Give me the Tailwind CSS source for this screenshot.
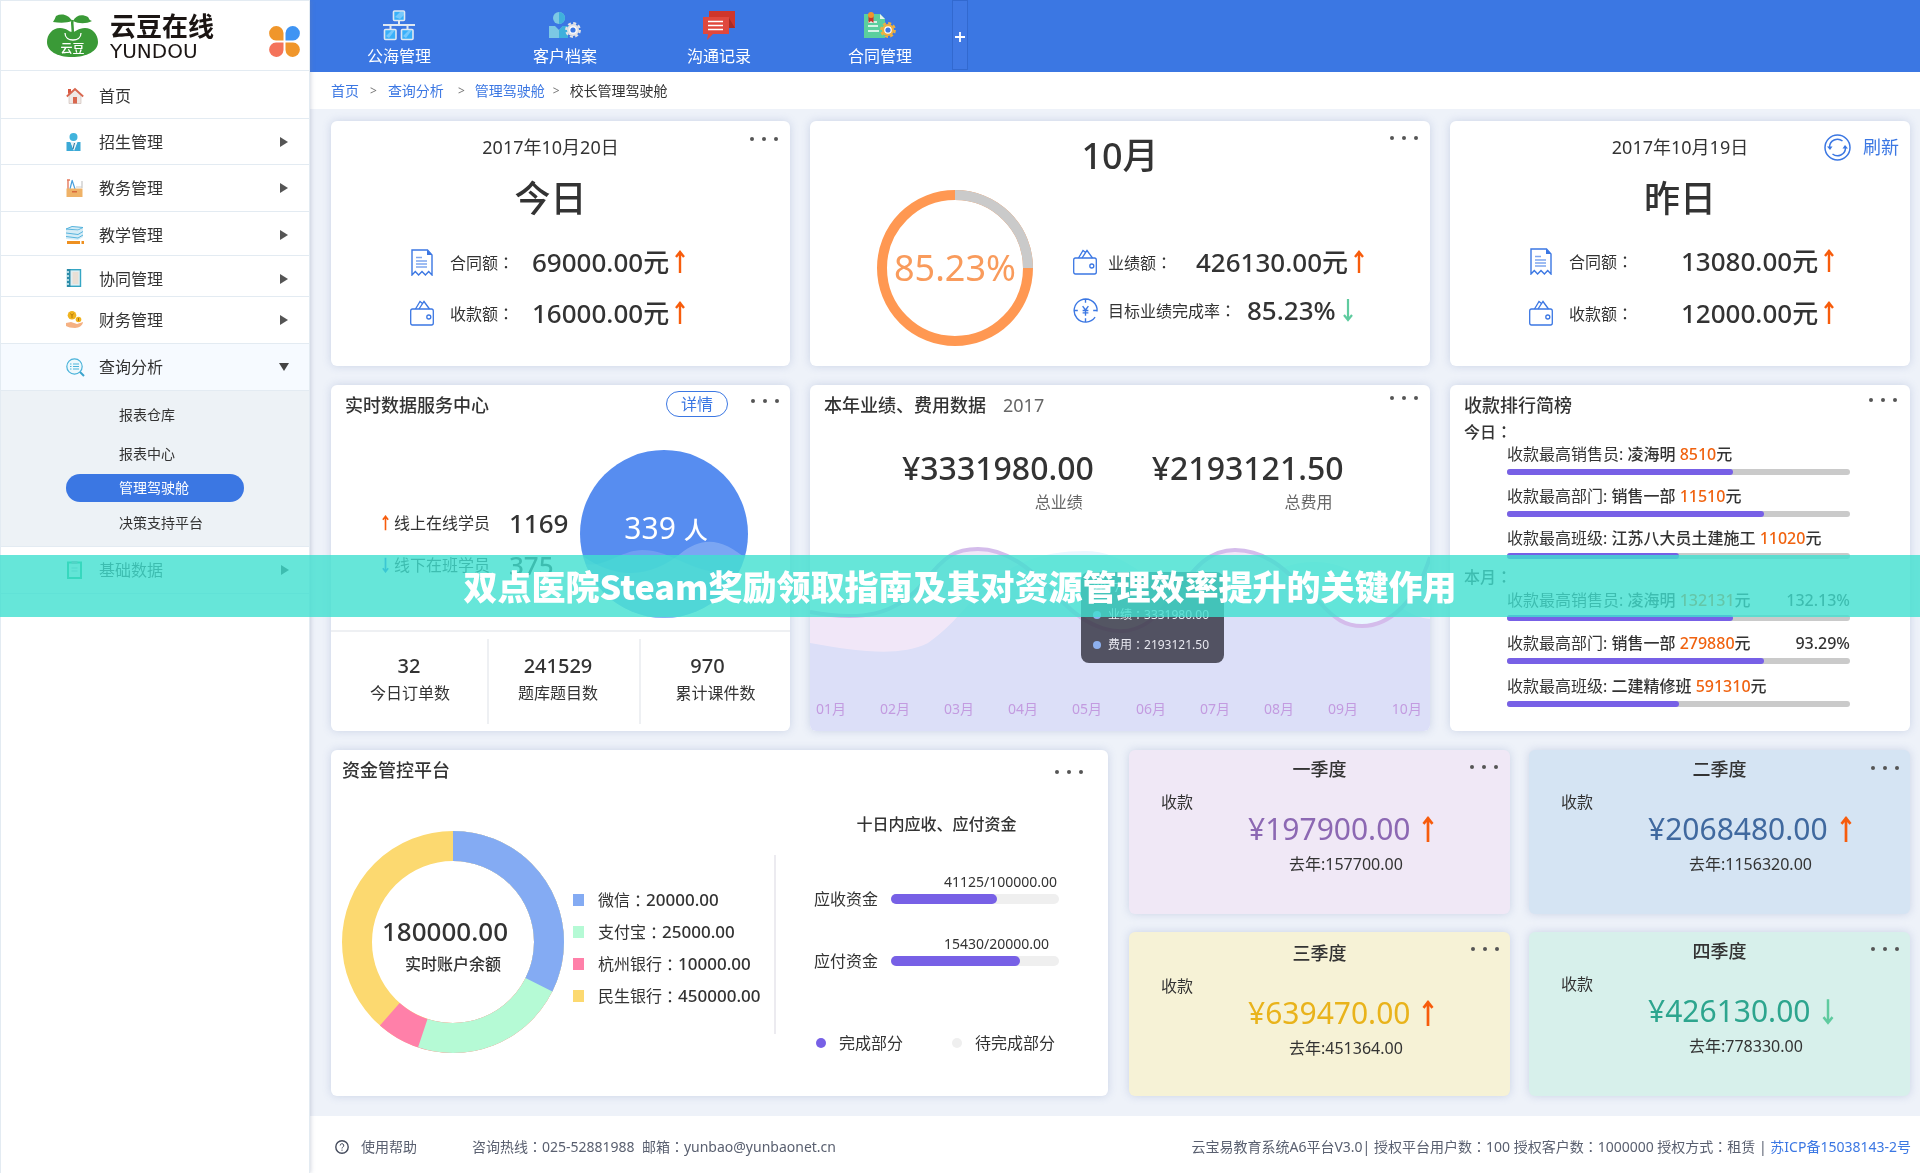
<!DOCTYPE html>
<html lang="zh-CN">
<head>
<meta charset="utf-8">
<title>校长管理驾驶舱</title>
<meta name="viewport" content="width=device-width, initial-scale=1">
<script src="https://cdn.jsdelivr.net/npm/@tailwindcss/browser@4"></script>
</head>
<body class="relative flex min-h-screen bg-[#eef2f9] font-['Noto_Sans','Noto_Sans_CJK_SC',sans-serif] text-base leading-6 text-[#333]">

<!-- shared symbols -->
<svg class="hidden">
  <symbol id="dots" viewBox="0 0 28 4"><g fill="#555"><circle cx="2" cy="2" r="2"/><circle cx="14" cy="2" r="2"/><circle cx="26" cy="2" r="2"/></g></symbol>
  <symbol id="up" viewBox="0 0 12 24"><path d="M6 1v22M2 7l4-5 4 5" fill="none" stroke="#f75c0c" stroke-width="2.4"/></symbol>
  <symbol id="down" viewBox="0 0 12 24"><path d="M6 1v21M2 17l4 5 4-5" fill="none" stroke="#5fcb9f" stroke-width="2.2"/></symbol>
  <symbol id="receipt" viewBox="0 0 22 27"><path d="M1 1h15.500l4.500 5v20l-3.300-3.500-3.300 3.500-3.400-3.500-3.400 3.500-3.300-3.500L1 26z" fill="none" stroke="#3b77e3" stroke-width="1.400"/><path d="M16 1v5h5z" fill="#3b77e3"/><path d="M5 8.500h6M5 12h11M5 15h11M5 18h11" stroke="#7fa6ee" stroke-width="1.300"/></symbol>
  <symbol id="wallet" viewBox="0 0 24 26"><g fill="none" stroke="#3b77e3" stroke-width="1.300"><path d="M2.500 9h19q1.800 0 1.800 2v12q0 2-1.800 2h-19Q.7 25 .7 23V11q0-2 1.800-2z"/><path d="M5.500 9l4.500-7.500 2.500 2M9 9l5-7.500L19.500 9"/><circle cx="18.800" cy="17" r="2"/></g></symbol>
  <symbol id="target" viewBox="0 0 26 26"><g fill="none" stroke="#3b77e3" stroke-width="1.400"><path d="M25 11A12 12 0 1 0 23 20M25 11v3M13 1v4M13 21v4M1 13h4M21 13h4"/><path d="M10 8.500l3 4 3-4M13 12.500v6M10 13h6M10 15.500h6"/></g></symbol>
  <symbol id="gear" viewBox="0 0 16 16"><circle cx="8" cy="8" r="6" fill="currentColor"/><circle cx="8" cy="8" r="6.800" fill="none" stroke="currentColor" stroke-width="2.200" stroke-dasharray="3 2.340"/><circle cx="8" cy="8" r="3.800" fill="#fff"/><circle cx="8" cy="8" r="2.600" fill="#3b77e3"/></symbol>
</svg>

<!-- sidebar -->
<aside class="z-10 w-[310px] shrink-0 border-x border-t border-[#e3ebf2] bg-white shadow-[1px_0_4px_rgba(120,130,160,0.3)]">
  <div class="flex h-[70px] items-center border-b border-[#e3ebf2] pl-[46px]">
    <svg class="h-[44px] w-[51px] shrink-0" viewBox="0 0 51 44">
      <path d="M25 18c-3 0-5-4-12-4C5 14 0 21 0 28c0 9 10 15 25 15s26-6 26-15c0-8-6-14-13-14-7 0-9 4-13 4z" fill="#3a9a37"/>
      <path d="M25 7C22 1 15-1 9 2q-1 3-3 6c7 1 14 1 19-1zM26 7c3-6 9-7 15-4q1 3 4 4c-6 3-13 3-19 0z" fill="#3a9a37"/>
      <path d="M25.500 6c-1 5 1 8 0 14" stroke="#3a9a37" stroke-width="2.500" fill="none"/>
      <path d="M18 19c0 5 4 7 8 7s8-2 8-7" stroke="#fff" stroke-width="1.300" fill="none"/>
      <text x="25.500" y="39" text-anchor="middle" font-size="12" font-weight="500" fill="#fff" font-family="Noto Sans CJK SC, sans-serif">云豆</text>
    </svg>
    <div class="ml-3 w-[104px] shrink-0 text-[#1b1513]">
      <div class="font-['Noto_Sans_CJK_SC',sans-serif] text-[26px] leading-[26px] font-bold">云豆在线</div>
      <div class="mt-1 font-['DejaVu_Sans',sans-serif] text-[20px] leading-[18px]">YUNDOU</div>
    </div>
    <svg class="mt-3 ml-[55px] size-[31px] shrink-0" viewBox="0 0 31 31">
      <path d="M14.500 14.500H7A7.200 7.200 0 1 1 14.500 7z" fill="#f0962b"/><path d="M16.500 14.500V7A7.200 7.200 0 1 1 24 14.500z" fill="#3f94f3"/>
      <path d="M14.500 16.500V24A7.200 7.200 0 1 1 7 16.500z" fill="#f4735a"/><path d="M16.500 16.500H24A7.200 7.200 0 1 1 16.500 24z" fill="#f0962b"/>
    </svg>
  </div>
  <nav>
    <a href="#" class="flex h-12 items-center border-b border-[#e3ebf2] pt-[2px] pl-[65px]">
      <svg class="mr-[15px] size-[18px]" viewBox="0 0 18 18"><path d="M3 9l6-6 6 6v7.500H3z" fill="#efe9e6" stroke="#c9b9b2" stroke-width=".6"/><path d="M.8 9.500L9 2l8.200 7.500" fill="none" stroke="#d9674f" stroke-width="1.800"/><path d="M2 2h3v3L2 7z" fill="#d9573f"/><path d="M7 10h4v6.500H7z" fill="#d9674f"/></svg>首页</a>
    <a href="#" class="flex h-[46px] items-center border-b border-[#e3ebf2] pl-[65px]">
      <svg class="mr-[15px] size-[18px]" viewBox="0 0 18 18"><circle cx="7.500" cy="4" r="4" fill="#41b3dc"/><path d="M.5 9h4l3.500 9 3.500-9h3v9H.5z" fill="#3ba9d6"/><path d="M4.500 9h6.500L7.700 17z" fill="#e8f3f8"/><path d="M8.500 10l-1.500 6" stroke="#2a6e95"/></svg>招生管理
      <svg class="mr-[21px] ml-auto h-[10px] w-2" viewBox="0 0 8 10"><path d="M0 0l8 5-8 5z" fill="#555"/></svg></a>
    <a href="#" class="flex h-[47px] items-center border-b border-[#e3ebf2] pl-[65px]">
      <svg class="mr-[15px] size-[18px]" viewBox="0 0 18 18"><path d="M2 1v10M1 1h3" stroke="#e57b5e" stroke-width="1.400"/><path d="M6 1l3 9M6 2L4 10" stroke="#4aa0dd" stroke-width="1.200"/><path d="M16 2v7" stroke="#bbb"/><path d="M10 8h6" stroke="#ccc"/><path d="M.5 9.500h16V18H.5z" fill="#efb267"/><path d="M6 12h5v1.500H6z" fill="#d86a3b"/></svg>教务管理
      <svg class="mr-[21px] ml-auto h-[10px] w-2" viewBox="0 0 8 10"><path d="M0 0l8 5-8 5z" fill="#555"/></svg></a>
    <a href="#" class="flex h-[44px] items-center border-b border-[#e3ebf2] pt-[2px] pl-[65px]">
      <svg class="mr-[15px] size-[18px]" viewBox="0 0 18 18"><path d="M0 3l6-3 11 1-5 3zM0 3v10l12 1 5-3V2l-5 3z" fill="#d5ecf6"/><path d="M0 3l6-2.500 11 1-5 2.500zM0 7l12 1.500 5-3M0 10.500L12 12l5-3" fill="none" stroke="#49aeda" stroke-width=".9"/><path d="M1 15h17v3H1z" fill="#ee9020"/><path d="M14 15h1.500v3H14z" fill="#fff"/></svg>教学管理
      <svg class="mr-[21px] ml-auto h-[10px] w-2" viewBox="0 0 8 10"><path d="M0 0l8 5-8 5z" fill="#555"/></svg></a>
    <a href="#" class="flex h-[41px] items-center border-b border-[#e3ebf2] pt-[6px] pl-[65px]">
      <svg class="mr-[15px] mb-[3px] size-[18px]" viewBox="0 0 18 18"><rect x="1.500" y=".7" width="13" height="16.600" fill="#dfeef2" stroke="#35a6c4" stroke-width="1.400"/><path d="M1 0h3.500v18H1z" fill="#2a8ba8"/><path d="M0 3h3M0 7h3M0 11h3M0 15h3" stroke="#d7f0f5" stroke-width="1.500"/><rect x="6.500" y="3" width="6" height="12" fill="#e9dfd5"/></svg>协同管理
      <svg class="mr-[21px] ml-auto h-[10px] w-2" viewBox="0 0 8 10"><path d="M0 0l8 5-8 5z" fill="#555"/></svg></a>
    <a href="#" class="flex h-[47px] items-center border-b border-[#e3ebf2] pl-[65px]">
      <svg class="mr-[15px] size-[18px]" viewBox="0 0 18 18"><circle cx="6" cy="4.300" r="4.300" fill="#f0b31e"/><path d="M4.500 2.500L6 4.500l1.500-2M6 4.500V7" fill="none" stroke="#b57a0b"/><circle cx="12.500" cy="8.500" r="2.800" fill="#f0b31e"/><path d="M12.500 7v3" stroke="#b57a0b"/><path d="M0 12l5-1 6 2 6-2c0 3-4 6-8 6-4 0-7-1-9-2z" fill="#f5b183"/></svg>财务管理
      <svg class="mr-[21px] ml-auto h-[10px] w-2" viewBox="0 0 8 10"><path d="M0 0l8 5-8 5z" fill="#555"/></svg></a>
    <a href="#" class="flex h-[47px] items-center border-b border-[#e3ebf2] bg-[#f6faff] pl-[65px]">
      <svg class="mr-[14px] size-[19px]" viewBox="0 0 19 19"><circle cx="8.500" cy="8.500" r="7.700" fill="#eef8fc" stroke="#4bb3da" stroke-width="1.200"/><path d="M7 6h6M7 8.500h6M7 11h6M4 6h1.500M4 8.500h1.500M4 11h1.500" stroke="#4bb3da" stroke-width="1.200"/><path d="M14 14l4 4" stroke="#3aa3cd" stroke-width="2"/></svg>查询分析
      <svg class="mr-[20px] ml-auto h-2 w-[10px]" viewBox="0 0 10 8"><path d="M0 0h10L5 8z" fill="#444"/></svg></a>
    <div class="flex flex-col border-b border-[#e3ebf2] bg-[#edf2f6] pt-1 pb-[3px] text-sm">
      <a href="#" class="flex h-[39px] items-center pl-[118px]">报表仓库</a>
      <a href="#" class="flex h-[39px] items-center pl-[118px]">报表中心</a>
      <a href="#" class="mt-px mr-[65px] ml-[65px] flex h-7 items-center rounded-full bg-[#3b77e3] pl-[53px] text-white">管理驾驶舱</a>
      <a href="#" class="flex h-[41px] items-center pl-[118px]">决策支持平台</a>
    </div>
    <a href="#" class="flex h-[47px] items-center border-b border-[#e3ebf2] pl-[65px]">
      <svg class="mr-[15px] size-[18px]" viewBox="0 0 18 18"><rect x="2" y="1.500" width="13" height="15.500" fill="#e9f7ee" stroke="#17b978" stroke-width="2"/><path d="M5.500 0h6v3h-6z" fill="#8fa3a0"/><path d="M5.500 7h6M5.500 10h6" stroke="#9bb"/></svg>基础数据
      <svg class="mr-[20px] ml-auto h-[10px] w-2" viewBox="0 0 8 10"><path d="M0 0l8 5-8 5z" fill="#333"/></svg></a>
  </nav>
</aside>

<div class="flex min-w-0 flex-1 flex-col">
  <!-- top bar -->
  <header class="flex h-[72px] bg-[#3b77e3] pl-[57px] text-white">
    <a href="#" class="flex flex-col items-center pt-[10px]">
      <svg class="h-[31px] w-8" viewBox="0 0 32 31"><g fill="#39b0fa" stroke="#dfe8f2" stroke-width="1.600"><rect x="10.500" y="1" width="11" height="9.500" rx="1"/><rect x="1.500" y="19.500" width="11.500" height="10" rx="1"/><rect x="18.500" y="19.500" width="11.500" height="10" rx="1"/></g><path d="M12 7l5-5h4v3l-4 4zM3 26l6-6h3l-6 8zM20 26l6-6h3l-6 8z" fill="#8fd3fd" opacity=".7"/><path d="M0 15h32M16 11v4M7.500 15v4M24.500 15v4" stroke="#dfe8f2" stroke-width="2"/></svg>
      <span class="mt-[3px]">公海管理</span></a>
    <a href="#" class="ml-[102px] flex flex-col items-center pt-[10px]">
      <svg class="h-[31px] w-8 text-[#e3e3e6]" viewBox="0 0 32 31"><circle cx="10" cy="8" r="6" fill="#7cc8e4"/><path d="M10 2a6 6 0 0 1 0 12z" fill="#3fb0dc"/><path d="M0 16h6l4 4 4-4h5v12H0z" fill="#7cc8e4"/><path d="M10 20l4-4h5v12h-9z" fill="#3fb0dc"/><use href="#gear" x="16" y="12" width="16" height="16"/></svg>
      <span class="mt-[3px]">客户档案</span></a>
    <a href="#" class="ml-[90px] flex flex-col items-center pt-[10px]">
      <svg class="h-[31px] w-[34px]" viewBox="0 0 34 31"><path d="M7 1h26v17h-5l-21-10z" fill="#cf362b"/><path d="M27 8l6 10h-6z" fill="#a82c25"/><path d="M1 7h26v17H11l-6 6 1-6H1z" fill="#e0483d"/><path d="M6 11.500h15M6 15.500h15M6 19.500h15" stroke="#fff" stroke-width="1.600"/></svg>
      <span class="mt-[3px]">沟通记录</span></a>
    <a href="#" class="ml-[97px] flex flex-col items-center pt-[10px]">
      <svg class="h-[31px] w-8 text-[#f0b03f]" viewBox="0 0 32 31"><path d="M0 4h16l5 5v19H0z" fill="#5bcf9e"/><path d="M16 4l5 5h-5z" fill="#e5f6ee"/><path d="M4 12h9M4 16h10M4 21h11" stroke="#fff" stroke-width="1.600"/><path d="M4.500 6h5v7L7 11l-2.500 2z" fill="#c8342b"/><circle cx="7" cy="5" r="3" fill="#f0952c"/><use href="#gear" x="16" y="12" width="16" height="16"/></svg>
      <span class="mt-[3px]">合同管理</span></a>
    <button class="ml-[40px] grid h-[70px] w-4 place-items-center border border-[#3269cf] bg-[#4079e4]" aria-label="添加"><svg class="mt-1 size-[14px]" viewBox="0 0 14 14"><path d="M7 2v10M2 7h10" stroke="#fff" stroke-width="1.800"/></svg></button>
  </header>
  <nav class="flex h-[37px] items-center bg-white pl-[21px] text-sm text-[#3b77e3]">
    <a href="#">首页</a><span class="mx-[11px] text-xs text-[#777]">&gt;</span>
    <a href="#">查询分析</a><span class="mr-[10px] ml-[14px] text-xs text-[#777]">&gt;</span>
    <a href="#">管理驾驶舱</a><span class="mr-[10px] ml-2 text-xs text-[#777]">&gt;</span>
    <span class="text-[#333]">校长管理驾驶舱</span>
  </nav>

  <main class="flex flex-1 flex-col gap-[19px] pt-3 pr-[10px] pb-5 pl-[21px]">
    <!-- day / month summary -->
    <div class="grid grid-cols-[459fr_620fr_460fr] gap-5">
      <section class="relative min-h-[245px] rounded-md bg-white pt-[14px] shadow-[0_0_9px_rgba(120,140,190,0.3)]">
        <button class="absolute top-2 right-3 flex h-5 items-center" aria-label="更多"><svg class="h-1 w-7"><use href="#dots"/></svg></button>
        <div class="pr-5 text-center text-lg leading-6">2017年10月20日</div>
        <h2 class="mt-[18px] pr-5 text-center text-4xl leading-[44px] font-medium">今日</h2>
        <div class="mt-[26px] ml-20 flex h-[30px] items-center"><svg class="mr-[17px] h-[27px] w-[22px]"><use href="#receipt"/></svg><span class="w-[82px]">合同额<span lang="zh-Hant" class="font-['Noto_Sans_CJK_TC']">：</span></span><span class="text-[26px] font-medium">69000.00元</span><svg class="ml-[5px] h-6 w-3"><use href="#up"/></svg></div>
        <div class="mt-[21px] ml-[79px] flex h-[30px] items-center"><svg class="mr-4 h-[26px] w-6"><use href="#wallet"/></svg><span class="w-[82px]">收款额<span lang="zh-Hant" class="font-['Noto_Sans_CJK_TC']">：</span></span><span class="text-[26px] font-medium">16000.00元</span><svg class="ml-[5px] h-6 w-3"><use href="#up"/></svg></div>
      </section>

      <section class="relative min-h-[245px] rounded-md bg-white pt-[13px] shadow-[0_0_9px_rgba(120,140,190,0.3)]">
        <button class="absolute top-[7px] right-3 flex h-5 items-center" aria-label="更多"><svg class="h-1 w-7"><use href="#dots"/></svg></button>
        <h2 class="text-center text-4xl leading-[44px] font-medium">10月</h2>
        <div class="mt-3 ml-[67px] flex">
          <div class="grid size-[156px] shrink-0 place-items-center">
            <svg class="col-start-1 row-start-1 size-[156px]" viewBox="0 0 156 156"><circle cx="78" cy="78" r="73" fill="none" stroke="#ff9852" stroke-width="10"/><path d="M78 5A73 73 0 0 1 151 78" fill="none" stroke="#cacaca" stroke-width="10"/></svg>
            <span class="col-start-1 row-start-1 text-4xl text-[#f99b5c]">85.23%</span>
          </div>
          <div class="ml-10 pt-[57px]">
            <div class="flex h-[30px] items-center"><svg class="mr-[11px] h-[26px] w-6"><use href="#wallet"/></svg><span class="w-[88px]">业绩额<span lang="zh-Hant" class="font-['Noto_Sans_CJK_TC']">：</span></span><span class="text-[26px] font-medium">426130.00元</span><svg class="ml-[5px] h-6 w-3"><use href="#up"/></svg></div>
            <div class="mt-[18px] flex h-[30px] items-center"><svg class="mr-[10px] size-[25px]"><use href="#target"/></svg><span class="w-[139px]">目标业绩完成率<span lang="zh-Hant" class="font-['Noto_Sans_CJK_TC']">：</span></span><span class="text-[26px] font-medium">85.23%</span><svg class="ml-[6px] h-6 w-3"><use href="#down"/></svg></div>
          </div>
        </div>
      </section>

      <section class="relative min-h-[245px] rounded-md bg-white pt-[14px] shadow-[0_0_9px_rgba(120,140,190,0.3)]">
        <button class="absolute top-3 right-[11px] flex h-7 items-center gap-3 text-lg text-[#3b77e3]">
          <svg class="size-[27px]" viewBox="0 0 27 27"><g fill="none" stroke="#3b77e3" stroke-width="1.500"><circle cx="13.500" cy="13.500" r="12.500"/><path d="M5.500 13a8 8 0 0 1 13-6M21.500 14a8 8 0 0 1-13 6"/></g><path d="M3 12.500h5.500L6 16zM24 14.500h-5.500L21 11z" fill="#3b77e3"/></svg>刷新</button>
        <div class="text-center text-lg leading-6">2017年10月19日</div>
        <h2 class="mt-[18px] text-center text-4xl leading-[44px] font-medium">昨日</h2>
        <div class="mt-[25px] ml-20 flex h-[30px] items-center"><svg class="mr-[17px] h-[27px] w-[22px]"><use href="#receipt"/></svg><span class="w-[112px]">合同额<span lang="zh-Hant" class="font-['Noto_Sans_CJK_TC']">：</span></span><span class="text-[26px] font-medium">13080.00元</span><svg class="ml-[5px] h-6 w-3"><use href="#up"/></svg></div>
        <div class="mt-[22px] ml-[79px] flex h-[30px] items-center"><svg class="mr-4 h-[26px] w-6"><use href="#wallet"/></svg><span class="w-[112px]">收款额<span lang="zh-Hant" class="font-['Noto_Sans_CJK_TC']">：</span></span><span class="text-[26px] font-medium">12000.00元</span><svg class="ml-[5px] h-6 w-3"><use href="#up"/></svg></div>
      </section>
    </div>

    <div class="grid grid-cols-[459fr_620fr_460fr] gap-5">
      <!-- realtime service centre -->
      <section class="min-h-[346px] rounded-md bg-white pt-[6px] shadow-[0_0_9px_rgba(120,140,190,0.3)]">
        <div class="flex h-7 items-center pr-[11px] pl-[14px]">
          <h3 class="text-lg font-medium">实时数据服务中心</h3>
          <button class="mb-[2px] ml-auto h-[26px] w-[62px] rounded-full border border-[#3b77e3] leading-6 text-[#3b77e3]">详情</button>
          <button class="mb-2 ml-[23px] flex h-5 items-center" aria-label="更多"><svg class="h-1 w-7"><use href="#dots"/></svg></button>
        </div>
        <div class="flex">
          <div class="flex w-[249px] shrink-0 flex-col gap-3 pt-[89px] pl-[50px]">
            <div class="flex h-[30px] items-center"><svg class="mr-1 h-4 w-[9px]"><use href="#up"/></svg><span class="w-[115px]">线上在线学员</span><span class="text-[26px] font-medium">1169</span></div>
            <div class="flex h-[30px] items-center"><svg class="mr-1 h-4 w-[9px]" viewBox="0 0 12 24"><path d="M6 1v21M2 17l4 5 4-5" fill="none" stroke="#2a66e0" stroke-width="2.600"/></svg><span class="w-[115px]">线下在班学员</span><span class="text-[26px] font-medium">375</span></div>
          </div>
          <div class="mt-[31px] grid size-[168px] shrink-0 place-items-center overflow-hidden rounded-full bg-[#578df0]">
            <svg class="col-start-1 row-start-1 size-[168px]" viewBox="0 0 168 168"><path d="M0 112c20 10 40-12 62-12 34 0 50 28 106 24v44H0z" fill="#fff" opacity=".15"/><path d="M0 104c40 30 75 20 100 0 24-20 44-14 68 6v58H0z" fill="#fff" opacity=".22"/></svg>
            <span class="col-start-1 row-start-1 mb-2 ml-1 text-[30px] text-white">339 <span class="text-2xl font-medium">人</span></span>
          </div>
        </div>
        <div class="mt-3 grid grid-cols-[158fr_152fr_149fr] border-t-2 border-[#eef0f3] py-[7px] text-center">
          <div class="h-[85px] border-r-2 border-[#eef0f3] pt-[14px]"><div class="text-xl leading-[26px] font-medium">32</div><div class="mt-[2px] pl-[2px]">今日订单数</div></div>
          <div class="h-[85px] border-r-2 border-[#eef0f3] pt-[14px] pr-3"><div class="text-xl leading-[26px] font-medium">241529</div><div class="mt-[2px]">题库题目数</div></div>
          <div class="h-[85px] pt-[14px]"><div class="pr-4 text-xl leading-[26px] font-medium">970</div><div class="mt-[2px]">累计课件数</div></div>
        </div>
      </section>

      <!-- yearly performance -->
      <section class="overflow-hidden rounded-md bg-white pt-[6px] shadow-[0_0_9px_rgba(120,140,190,0.3)]">
        <div class="flex h-7 items-center pr-3 pl-[14px]">
          <h3 class="text-lg font-medium">本年业绩、费用数据</h3><span class="ml-[17px] text-lg text-[#666]">2017</span>
          <button class="mb-[14px] ml-auto flex h-5 items-center" aria-label="更多"><svg class="h-1 w-7"><use href="#dots"/></svg></button>
        </div>
        <div class="mt-[29px] ml-[92px] flex gap-[58px]">
          <div class="text-right"><div class="text-[32px] leading-10 font-medium">¥3331980.00</div><div class="mt-[2px] pr-[11px] text-[#666]">总业绩</div></div>
          <div class="text-right"><div class="text-[32px] leading-10 font-medium">¥2193121.50</div><div class="mt-[2px] pr-[11px] text-[#666]">总费用</div></div>
        </div>
        <div class="relative mt-[17px] grid">
          <svg class="col-start-1 row-start-1 h-[200px] w-full" viewBox="0 0 620 200" preserveAspectRatio="none">
            <path d="M0 81C50 90 85 86 115 50C135 25 145 18 168 18C200 18 225 42 250 68C275 95 310 112 340 90C375 60 385 19 425 19C463 19 485 50 510 72C525 88 535 95 552 95C580 95 606 70 620 26V200H0Z" fill="#f1e7f8"/>
            <path class="mix-blend-multiply" d="M0 112C50 121 90 126 118 112C150 90 160 65 190 44C220 24 250 20 275 20C315 20 335 50 375 66C420 82 450 31 504 31C560 31 580 84 620 88V200H0Z" fill="#e9f7ff"/>
            <path d="M0 81C50 90 85 86 115 50C135 25 145 18 168 18C200 18 225 42 250 68C275 95 310 112 340 90C375 60 385 19 425 19C463 19 485 50 510 72C525 88 535 95 552 95C580 95 606 70 620 26" fill="none" stroke="#d4bceb" stroke-width="4"/>
          </svg>
          <div class="z-[1] col-start-1 row-start-1 mb-3 flex justify-between self-end pr-[8px] pl-[6px] text-sm text-[#c39be0]">
            <span>01月</span><span>02月</span><span>03月</span><span>04月</span><span>05月</span><span>06月</span><span>07月</span><span>08月</span><span>09月</span><span>10月</span>
          </div>
          <div class="absolute top-[41px] left-[271px] z-[2] h-[91px] w-[143px] rounded-lg bg-[#3a3a48]/85 pt-1 pl-3 text-xs leading-[30px] text-[#e8e8f0]">
            <div class="h-6 leading-6">2017</div>
            <div class="flex items-center"><i class="mr-[7px] size-2 rounded-full bg-[#8db0ee]"></i>业绩<span lang="zh-Hant" class="font-['Noto_Sans_CJK_TC']">：</span>3331980.00</div>
            <div class="flex items-center"><i class="mr-[7px] size-2 rounded-full bg-[#8db0ee]"></i>费用<span lang="zh-Hant" class="font-['Noto_Sans_CJK_TC']">：</span>2193121.50</div>
          </div>
        </div>
      </section>

      <!-- ranking -->
      <section class="rounded-md bg-white pt-[6px] shadow-[0_0_9px_rgba(120,140,190,0.3)]">
        <div class="flex h-7 items-center pr-[13px] pl-[14px]">
          <h3 class="text-lg font-medium">收款排行简榜</h3>
          <button class="mb-[10px] ml-auto flex h-5 items-center" aria-label="更多"><svg class="h-1 w-7"><use href="#dots"/></svg></button>
        </div>
        <h4 class="mt-[2px] pl-[14px] leading-5 font-medium">今日<span lang="zh-Hant" class="font-['Noto_Sans_CJK_TC']">：</span></h4>
        <ul class="mt-[2px] mr-[60px] ml-[57px] flex flex-col gap-[11px] leading-5 whitespace-nowrap">
          <li>收款最高销售员: <b class="font-medium">凌海明 <span class="text-[#f0620f]">8510</span>元</b><div class="mt-[5px] h-[6px] rounded-full bg-[#cacaca]"><div class="h-[6px] rounded-full bg-[#7760e6]" style="width:66%"></div></div></li>
          <li>收款最高部门: <b class="font-medium">销售一部 <span class="text-[#f0620f]">11510</span>元</b><div class="mt-[5px] h-[6px] rounded-full bg-[#cacaca]"><div class="h-[6px] rounded-full bg-[#7760e6]" style="width:75%"></div></div></li>
          <li>收款最高班级: <b class="font-medium">江苏八大员土建施工 <span class="text-[#f0620f]">11020</span>元</b><div class="mt-[5px] h-[6px] rounded-full bg-[#cacaca]"><div class="h-[6px] rounded-full bg-[#7760e6]" style="width:50%"></div></div></li>
        </ul>
        <h4 class="mt-[7px] pl-[14px] leading-5 font-medium">本月<span lang="zh-Hant" class="font-['Noto_Sans_CJK_TC']">：</span></h4>
        <ul class="mt-[3px] mr-[60px] ml-[57px] flex flex-col gap-3 leading-5 whitespace-nowrap">
          <li><span class="float-right font-medium">132.13%</span>收款最高销售员: <b class="font-medium">凌海明 <span class="text-[#f0620f]">132131</span>元</b><div class="mt-[5px] h-[6px] rounded-full bg-[#cacaca]"><div class="h-[6px] rounded-full bg-[#7760e6]" style="width:66%"></div></div></li>
          <li><span class="float-right font-medium">93.29%</span>收款最高部门: <b class="font-medium">销售一部 <span class="text-[#f0620f]">279880</span>元</b><div class="mt-[5px] h-[6px] rounded-full bg-[#cacaca]"><div class="h-[6px] rounded-full bg-[#7760e6]" style="width:75%"></div></div></li>
          <li>收款最高班级: <b class="font-medium">二建精修班 <span class="text-[#f0620f]">591310</span>元</b><div class="mt-[5px] h-[6px] rounded-full bg-[#cacaca]"><div class="h-[6px] rounded-full bg-[#7760e6]" style="width:50%"></div></div></li>
        </ul>
      </section>
    </div>

    <div class="grid grid-cols-[777fr_781fr] gap-[21px]">
      <!-- funds -->
      <section class="min-h-[346px] rounded-md bg-white pt-[6px] shadow-[0_0_9px_rgba(120,140,190,0.3)]">
        <div class="flex h-7 items-center pr-[25px] pl-[11px]">
          <h3 class="text-lg font-medium">资金管控平台</h3>
          <button class="ml-auto flex h-5 items-center" aria-label="更多"><svg class="mt-1 h-1 w-7"><use href="#dots"/></svg></button>
        </div>
        <div class="flex">
          <div class="mt-[46px] ml-[10px] grid size-[224px] shrink-0 place-items-center">
            <svg class="col-start-1 row-start-1 size-[224px] -rotate-90" viewBox="0 0 224 224"><g fill="none" stroke-width="30">
              <circle cx="112" cy="112" r="96" pathLength="360" stroke="#fcd970"/>
              <circle cx="112" cy="112" r="96" pathLength="360" stroke="#ff80a9" stroke-dasharray="221.200 360"/>
              <circle cx="112" cy="112" r="96" pathLength="360" stroke="#b5fad5" stroke-dasharray="198.400 360"/>
              <circle cx="112" cy="112" r="96" pathLength="360" stroke="#84abf3" stroke-dasharray="116.500 360"/></g></svg>
            <div class="col-start-1 row-start-1 pt-1 text-center font-medium"><div class="pr-4 text-[26px] leading-9">180000.00</div><div class="mt-[3px]">实时账户余额</div></div>
          </div>
          <ul class="mt-[100px] ml-2 w-[201px] shrink-0 leading-8">
            <li class="flex items-center"><i class="mr-[14px] h-3 w-[11px] bg-[#84abf3]"></i>微信<span lang="zh-Hant" class="font-['Noto_Sans_CJK_TC']">：</span><b class="text-[17px] font-medium">20000.00</b></li>
            <li class="flex items-center"><i class="mr-[14px] h-3 w-[11px] bg-[#b5fad5]"></i>支付宝<span lang="zh-Hant" class="font-['Noto_Sans_CJK_TC']">：</span><b class="text-[17px] font-medium">25000.00</b></li>
            <li class="flex items-center"><i class="mr-[14px] h-3 w-[11px] bg-[#ff80a9]"></i>杭州银行<span lang="zh-Hant" class="font-['Noto_Sans_CJK_TC']">：</span><b class="text-[17px] font-medium">10000.00</b></li>
            <li class="flex items-center"><i class="mr-[14px] h-3 w-[11px] bg-[#fcd970]"></i>民生银行<span lang="zh-Hant" class="font-['Noto_Sans_CJK_TC']">：</span><b class="text-[17px] font-medium">450000.00</b></li>
          </ul>
          <div class="mt-[71px] h-[179px] w-[2px] shrink-0 bg-[#ecebf0]"></div>
          <div class="flex-1 pt-7 pr-[49px] pl-[38px]">
            <h4 class="text-center font-medium">十日内应收、应付资金</h4>
            <div class="mt-9 flex items-end"><span class="w-[77px]">应收资金</span><div class="mb-[7px] flex-1"><div class="pl-[53px] text-sm leading-5 whitespace-nowrap">41125/100000.00</div><div class="mt-[2px] h-[10px] rounded-full bg-[#efefef]"><div class="h-[10px] rounded-full bg-[#7760e6]" style="width:63%"></div></div></div></div>
            <div class="mt-[23px] flex items-end"><span class="w-[77px]">应付资金</span><div class="mb-[7px] flex-1"><div class="pl-[53px] text-sm leading-5 whitespace-nowrap">15430/20000.00</div><div class="mt-[2px] h-[10px] rounded-full bg-[#efefef]"><div class="h-[10px] rounded-full bg-[#7760e6]" style="width:77%"></div></div></div></div>
            <div class="mt-[58px] ml-[2px] flex items-center"><i class="mr-[13px] size-[10px] rounded-full bg-[#7760e6]"></i>完成部分<i class="mr-[13px] ml-[49px] size-[10px] rounded-full bg-[#efefef]"></i>待完成部分</div>
          </div>
        </div>
      </section>

      <!-- quarters -->
      <div class="grid grid-cols-2 gap-x-[19px] gap-y-[18px]">
        <section class="relative min-h-[164px] rounded-md bg-[#f0e8f6] pt-[7px] shadow-[0_0_9px_rgba(120,140,190,0.3)]">
          <button class="absolute top-[7px] right-3 flex h-5 items-center" aria-label="更多"><svg class="h-1 w-7"><use href="#dots"/></svg></button>
          <h3 class="text-center text-lg leading-6 font-medium">一季度</h3><div class="mt-[9px] pl-8">收款</div>
          <div class="flex h-[30px] items-center pl-[119px] text-[30px] text-[#8c68b3]">¥197900.00<svg class="ml-[11px] h-[27px] w-[14px]"><use href="#up"/></svg></div>
          <div class="mt-2 pl-40">去年:157700.00</div>
        </section>
        <section class="relative min-h-[164px] rounded-md bg-[#d5e4f3] pt-[7px] shadow-[0_0_9px_rgba(120,140,190,0.3)]">
          <button class="absolute top-2 right-[11px] flex h-5 items-center" aria-label="更多"><svg class="h-1 w-7"><use href="#dots"/></svg></button>
          <h3 class="text-center text-lg leading-6 font-medium">二季度</h3><div class="mt-[9px] pl-8">收款</div>
          <div class="flex h-[30px] items-center pl-[119px] text-[30px] text-[#40699f]">¥2068480.00<svg class="ml-[11px] h-[27px] w-[14px]"><use href="#up"/></svg></div>
          <div class="mt-2 pl-40">去年:1156320.00</div>
        </section>
        <section class="relative min-h-[164px] rounded-md bg-[#f6f2d6] pt-[9px] shadow-[0_0_9px_rgba(120,140,190,0.3)]">
          <button class="absolute top-[7px] right-[11px] flex h-5 items-center" aria-label="更多"><svg class="h-1 w-7"><use href="#dots"/></svg></button>
          <h3 class="text-center text-lg leading-6 font-medium">三季度</h3><div class="mt-[9px] pl-8">收款</div>
          <div class="flex h-[30px] items-center pl-[119px] text-[30px] text-[#e9b31b]">¥639470.00<svg class="ml-[11px] h-[27px] w-[14px]"><use href="#up"/></svg></div>
          <div class="mt-2 pl-40">去年:451364.00</div>
        </section>
        <section class="relative min-h-[164px] rounded-md bg-[#d7f0eb] pt-[7px] shadow-[0_0_9px_rgba(120,140,190,0.3)]">
          <button class="absolute top-[7px] right-[11px] flex h-5 items-center" aria-label="更多"><svg class="h-1 w-7"><use href="#dots"/></svg></button>
          <h3 class="text-center text-lg leading-6 font-medium">四季度</h3><div class="mt-[9px] pl-8">收款</div>
          <div class="flex h-[30px] items-center pl-[119px] text-[30px] text-[#2da58e]">¥426130.00<svg class="ml-[11px] h-[27px] w-[14px]"><use href="#down"/></svg></div>
          <div class="mt-2 pl-40">去年:778330.00</div>
        </section>
      </div>
    </div>
  </main>

  <footer class="flex min-h-[57px] items-center bg-white pt-1 pr-[9px] pl-[25px] text-sm text-[#5a6070]">
    <a href="#" class="flex items-center"><svg class="mr-3 size-[14px]" viewBox="0 0 14 14"><circle cx="7" cy="7" r="6.200" fill="none" stroke="#444b5c" stroke-width="1.400"/><path d="M5.200 5.500a1.800 1.800 0 1 1 2.600 1.600q-.8.400-.8 1.400M7 9.600v1.200" fill="none" stroke="#444b5c"/></svg>使用帮助</a>
    <span class="ml-[55px]">咨询热线<span lang="zh-Hant" class="font-['Noto_Sans_CJK_TC']">：</span>025-52881988&nbsp; 邮箱<span lang="zh-Hant" class="font-['Noto_Sans_CJK_TC']">：</span>yunbao@yunbaonet.cn</span>
    <span class="ml-auto">云宝易教育系统A6平台V3.0| 授权平台用户数<span lang="zh-Hant" class="font-['Noto_Sans_CJK_TC']">：</span>100 授权客户数<span lang="zh-Hant" class="font-['Noto_Sans_CJK_TC']">：</span>1000000 授权方式<span lang="zh-Hant" class="font-['Noto_Sans_CJK_TC']">：</span>租赁 | <a href="#" class="text-[#3b77e3]">苏ICP备15038143-2号</a></span>
  </footer>
</div>

<!-- banner laid over the page -->
<div class="absolute inset-x-0 top-[555px] z-20 flex h-[62px] items-center justify-center bg-[#40e0d0]/80 font-['Noto_Sans_CJK_SC',sans-serif] text-[34px] font-black whitespace-nowrap text-white">双点医院Steam奖励领取指南及其对资源管理效率提升的关键作用</div>
</body>
</html>
